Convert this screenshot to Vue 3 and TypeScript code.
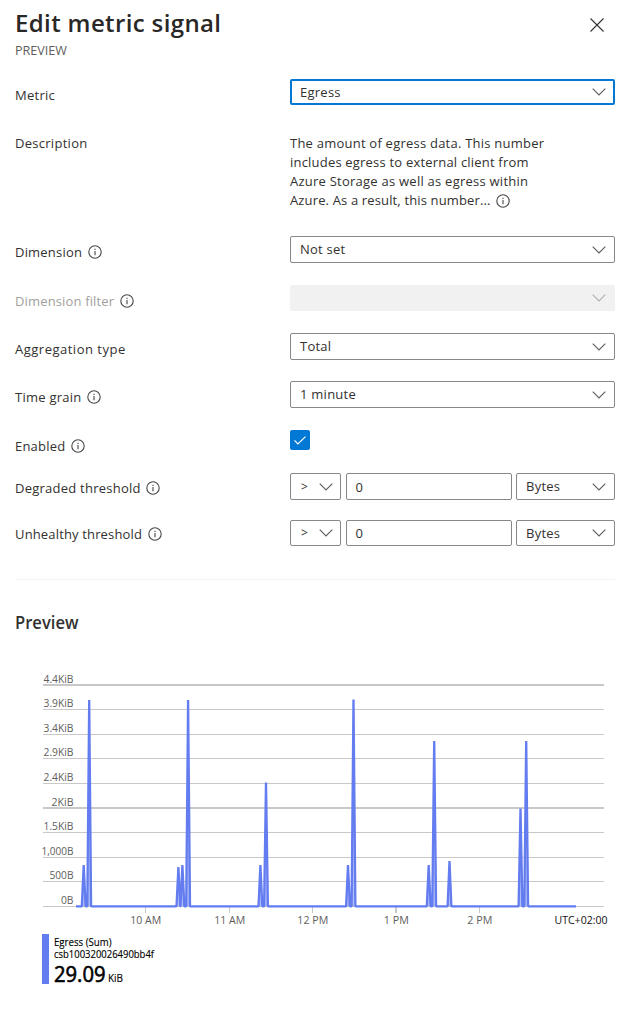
<script setup lang="ts">
import { ref } from 'vue'

interface Field {
  key: string
  label: string
  info?: boolean
  kind: 'select' | 'text' | 'check' | 'threshold'
  value?: string
  state?: 'focused' | 'disabled'
}

const fields: Field[] = [
  { key: 'metric', label: 'Metric', kind: 'select', value: 'Egress', state: 'focused' },
  { key: 'description', label: 'Description', kind: 'text' },
  { key: 'dimension', label: 'Dimension', info: true, kind: 'select', value: 'Not set' },
  { key: 'filter', label: 'Dimension filter', info: true, kind: 'select', value: '', state: 'disabled' },
  { key: 'aggregation', label: 'Aggregation type', kind: 'select', value: 'Total' },
  { key: 'grain', label: 'Time grain', info: true, kind: 'select', value: '1 minute' },
  { key: 'enabled', label: 'Enabled', info: true, kind: 'check' },
  { key: 'degraded', label: 'Degraded threshold', info: true, kind: 'threshold', value: '0' },
  { key: 'unhealthy', label: 'Unhealthy threshold', info: true, kind: 'threshold', value: '0' },
]

const description = [
  { text: 'The amount of egress data. This number', width: 254 },
  { text: 'includes egress to external client from', width: 238.5 },
  { text: 'Azure Storage as well as egress within', width: 238 },
  { text: 'Azure. As a result, this number...', width: 200.5 },
]

const enabled = ref(true)

// Chart coordinates: the svg's origin is at the top left of the plot block.
const grid = [
  { y: 25, label: '4.4KiB', w: 30, major: true },
  { y: 49.5, label: '3.9KiB', w: 30 },
  { y: 74.5, label: '3.4KiB', w: 30 },
  { y: 98.5, label: '2.9KiB', w: 30 },
  { y: 123.5, label: '2.4KiB', w: 30 },
  { y: 148, label: '2KiB', w: 22, major: true },
  { y: 172.5, label: '1.5KiB', w: 30 },
  { y: 197.5, label: '1,000B', w: 32 },
  { y: 221.5, label: '500B', w: 24 },
  { y: 246.5, label: '0B', w: 12.5 },
]
const hours = [
  { x: 145.5, label: '10 AM', w: 31 },
  { x: 229.5, label: '11 AM', w: 31 },
  { x: 312.5, label: '12 PM', w: 31 },
  { x: 396, label: '1 PM', w: 25 },
  { x: 479.5, label: '2 PM', w: 25 },
]
const spikes: [number, number][] = [
  [83.7, 205], [89.2, 40], [178.4, 207], [182.4, 205], [188.1, 40],
  [260.4, 205], [266, 122.5], [348, 205], [353.5, 39.5],
  [428.7, 205], [434.2, 81], [449.5, 201], [520.5, 148.5], [526.2, 81],
]
const base = 246.3
const line = 'M76 ' + base + spikes.map(([x, y]) => ` L${x - 1.9} ${base} L${x} ${y} L${x + 1.9} ${base}`).join('') + ` L576 ${base}`
</script>

<template>
  <main class="panel">
    <header class="head">
      <div>
        <h1><svg class="title" width="210" height="32"><text x="0" y="25" textLength="206">Edit metric signal</text></svg></h1>
        <svg class="sub" width="60" height="16"><text x="0" y="12" textLength="52" lengthAdjust="spacingAndGlyphs">PREVIEW</text></svg>
      </div>
      <svg class="close" width="14" height="14" viewBox="0 0 14 14"><path d="M.5.5l13 13M13.5.5l-13 13" /></svg>
    </header>

    <section class="form">
      <div v-for="f in fields" :key="f.key" class="row" :class="f.key">
        <div class="label">
          <span>{{ f.label }}</span>
          <svg v-if="f.info" class="info" width="14" height="14" viewBox="0 0 14 14"><circle cx="7" cy="7" r="6.2" /><path d="M7 6v4.3M7 3.8v1.1" /></svg>
        </div>
        <div v-if="f.kind === 'select'" class="box select" :class="f.state">
          <span>{{ f.value }}</span>
          <svg class="chev" width="14" height="8" viewBox="0 0 14 8"><path d="M.7.7L7 7 13.3.7" /></svg>
        </div>
        <div v-else-if="f.kind === 'text'" class="desc">
          <div v-for="(d, i) in description" :key="i" class="desc-line">
            <svg :width="d.width" height="19"><text x="0" y="14" :textLength="d.width">{{ d.text }}</text></svg>
            <svg v-if="i === 3" class="info" width="14" height="14" viewBox="0 0 14 14"><circle cx="7" cy="7" r="6.2" /><path d="M7 6v4.3M7 3.8v1.1" /></svg>
          </div>
        </div>
        <button v-else-if="f.kind === 'check'" class="check" @click="enabled = !enabled">
          <svg v-if="enabled" width="12" height="9" viewBox="0 0 12 9"><path d="M.5 4.4l3.4 3.5L11.5.6" /></svg>
        </button>
        <div v-else class="threshold">
          <div class="box select op">
            <span>&gt;</span>
            <svg class="chev" width="14" height="8" viewBox="0 0 14 8"><path d="M.7.7L7 7 13.3.7" /></svg>
          </div>
          <div class="box amount"><span>{{ f.value }}</span></div>
          <div class="box select unit">
            <span>Bytes</span>
            <svg class="chev" width="14" height="8" viewBox="0 0 14 8"><path d="M.7.7L7 7 13.3.7" /></svg>
          </div>
        </div>
      </div>
    </section>

    <section class="preview">
      <h2><svg width="70" height="24"><text x="0" y="18" textLength="63.5" lengthAdjust="spacingAndGlyphs">Preview</text></svg></h2>
      <svg class="chart" width="631" height="270" viewBox="0 0 631 270">
        <g v-for="g in grid" :key="g.label">
          <line x1="43" x2="604" :y1="g.y" :y2="g.y" class="grid" :class="{ major: g.major }" />
          <text :x="73.5 - g.w" :y="Math.floor(g.y) - 2" :textLength="g.w" lengthAdjust="spacingAndGlyphs">{{ g.label }}</text>
        </g>
        <g v-for="h in hours" :key="h.label">
          <line :x1="h.x" :x2="h.x" y1="247" y2="253" class="grid" :class="{ major: h.label === '1 PM' }" />
          <text :x="h.x - h.w / 2 + 0.3" y="264" :textLength="h.w" lengthAdjust="spacingAndGlyphs">{{ h.label }}</text>
        </g>
        <text class="zone" x="554.5" y="264" textLength="53" lengthAdjust="spacingAndGlyphs">UTC+02:00</text>
        <path :d="line" class="series" />
      </svg>
      <div class="legend">
        <svg width="140" height="54">
          <text x="0" y="12" class="small" textLength="57.5" lengthAdjust="spacingAndGlyphs">Egress (Sum)</text>
          <text x="0" y="24" class="small" textLength="100" lengthAdjust="spacingAndGlyphs">csb100320026490bb4f</text>
          <text x="0" y="47.5" class="big" textLength="51.5" lengthAdjust="spacingAndGlyphs">29.09</text>
          <text x="54" y="47.5" class="small" textLength="15" lengthAdjust="spacingAndGlyphs">KiB</text>
        </svg>
      </div>
    </section>
  </main>
</template>

<style>
body { background: #fff; }
</style>

<style scoped>
.panel {
  box-sizing: border-box;
  width: 631px;
  height: 1022px;
  overflow: hidden;
  font-family: "Open Sans", "Noto Sans", sans-serif;
  font-size: 13px;
  color: #323130;
}
svg { display: block; overflow: visible; flex: none; }
svg text { fill: #323130; }
h1, h2 { margin: 0; }
.head { display: flex; justify-content: space-between; height: 79px; padding: 0 27.5px 0 15px; box-sizing: border-box; }
.head h1 { padding-top: 7px; }
.title text { font-size: 24px; font-weight: 600; fill: #292827; }
.sub { margin-top: 4px; }
.sub text { font-size: 12.5px; fill: #605e5c; }
.close { margin-top: 17.5px; fill: none; stroke: #323130; stroke-width: 1.1; }
.form { margin: 0 16px 0 15px; height: 500px; border-bottom: 1px solid #f3f2f1; }
.row { display: grid; grid-template-columns: 275px 325px; align-items: start; height: 48px; }
.metric { height: 55px; }
.description { height: 102px; }
.dimension, .grain { height: 49px; }
.enabled { height: 43px; }
.degraded { height: 47px; }
.label { display: flex; align-items: center; gap: 5.5px; padding-top: 6px; line-height: 20px; white-space: nowrap; letter-spacing: .2px; }
.metric .label, .description .label { letter-spacing: .28px; }
.aggregation .label { letter-spacing: .5px; }
.degraded .label { padding-top: 5px; letter-spacing: .24px; }
.unhealthy .label { padding-top: 4px; letter-spacing: .15px; }
.grain .label { letter-spacing: .25px; }
.description .label { padding-top: 0; margin-top: -1px; }
.filter .label { letter-spacing: .15px; }
.filter .label span { color: #a19f9d; }
.info { fill: none; stroke: #484644; stroke-width: 1.1; }
.box { box-sizing: border-box; height: 27px; border: 1px solid #8a8886; border-radius: 2px; display: flex; align-items: center; padding: 0 8px 0 9px; line-height: 24px; letter-spacing: .25px; }
.select { justify-content: space-between; }
.select span { margin-top: -2px; }
.metric .box, .filter .box, .unhealthy .box { height: 26px; }
.metric .select span, .unhealthy .select span { margin-top: 0; }
.focused { border: 2px solid #0078d4; padding: 0 7px 0 8px; }
.disabled { background: #f1f1f1; border-color: #f1f1f1; }
.chev { fill: none; stroke: #605e5c; stroke-width: 1.15; }
.disabled .chev { stroke: #b3b1af; }
.desc-line { display: flex; align-items: center; gap: 5px; height: 19px; }
.check { width: 20px; height: 20px; padding: 0; border: 0; border-radius: 2px; background: #0078d4; display: flex; align-items: center; justify-content: center; }
.check path { fill: none; stroke: #fff; stroke-width: 1.2; }
.threshold { display: grid; grid-template-columns: 51px 166px 99px; column-gap: 5px; }
.threshold .op { padding: 0 7px 0 10px; }
.threshold .op span { font-size: 12px; margin-top: 0; }
.threshold .unit { margin: 0 0 0 -1px; width: 99px; }
.threshold .amount { padding-left: 8.5px; }
.preview h2 { padding: 31px 0 0 15px; }
.preview h2 text { font-size: 17.5px; font-weight: 600; }
.chart { margin-top: 25px; }
.chart text { font-size: 11.5px; fill: #605e5c; }
.chart .zone { fill: #111; }
.grid { stroke: #c8c8c8; stroke-width: 1; }
.major { stroke-width: 2; }
.series { fill: #637cef; fill-opacity: .5; stroke: #637cef; stroke-width: 2.3; stroke-linejoin: bevel; }
.legend { margin: 4px 0 0 42px; border-left: 7px solid #637cef; height: 50px; padding-left: 4.5px; }
.legend text { fill: #000; }
.legend .small { font-size: 11px; stroke: #000; stroke-width: .15; }
.legend .big { font-size: 21px; stroke: #000; stroke-width: .6; }
</style>
